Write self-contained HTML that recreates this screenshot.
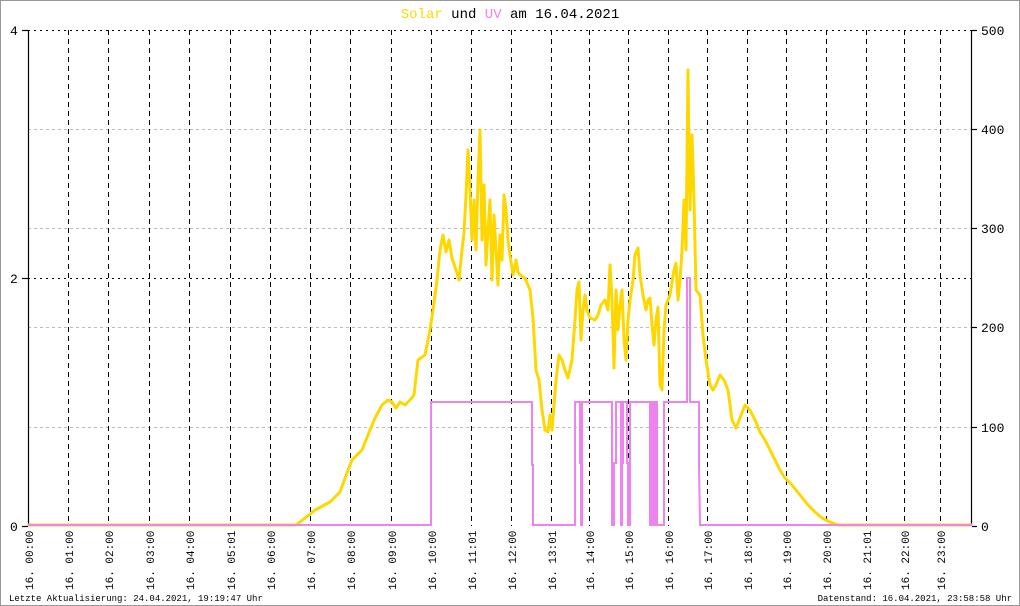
<!DOCTYPE html>
<html><head><meta charset="utf-8"><style>
html,body{margin:0;padding:0;background:#fff;}
svg{display:block;}
text{font-family:"Liberation Mono","DejaVu Sans Mono",monospace;}
</style></head><body>
<svg width="1020" height="606" viewBox="0 0 1020 606" xmlns="http://www.w3.org/2000/svg">
<rect x="0.5" y="0.5" width="1019" height="605" fill="#fff" stroke="#999"/>
<text x="510" y="18" font-size="14" text-anchor="middle"><tspan fill="#ffd700">Solar</tspan><tspan fill="#000"> und </tspan><tspan fill="#ee82ee">UV</tspan><tspan fill="#000"> am 16.04.2021</tspan></text>
<g stroke="#bbb" stroke-dasharray="3,3" stroke-width="1">
<line x1="28" y1="129.5" x2="972" y2="129.5"/>
<line x1="28" y1="228.5" x2="972" y2="228.5"/>
<line x1="28" y1="327.5" x2="972" y2="327.5"/>
<line x1="28" y1="427.5" x2="972" y2="427.5"/>
</g>
<g stroke="#000" stroke-dasharray="2,4" stroke-width="1">
<line x1="28" y1="30.5" x2="972" y2="30.5"/>
<line x1="28" y1="278.5" x2="972" y2="278.5"/>
</g>
<g stroke="#000" stroke-dasharray="5,4" stroke-width="1">
<line x1="68.5" y1="30" x2="68.5" y2="526"/><line x1="108.5" y1="30" x2="108.5" y2="526"/>
<line x1="149.5" y1="30" x2="149.5" y2="526"/><line x1="189.5" y1="30" x2="189.5" y2="526"/>
<line x1="230.5" y1="30" x2="230.5" y2="526"/><line x1="270.5" y1="30" x2="270.5" y2="526"/>
<line x1="310.5" y1="30" x2="310.5" y2="526"/><line x1="350.5" y1="30" x2="350.5" y2="526"/>
<line x1="391.5" y1="30" x2="391.5" y2="526"/><line x1="431.5" y1="30" x2="431.5" y2="526"/>
<line x1="471.5" y1="30" x2="471.5" y2="526"/><line x1="511.5" y1="30" x2="511.5" y2="526"/>
<line x1="551.5" y1="30" x2="551.5" y2="526"/><line x1="589.5" y1="30" x2="589.5" y2="526"/>
<line x1="628.5" y1="30" x2="628.5" y2="526"/><line x1="668.5" y1="30" x2="668.5" y2="526"/>
<line x1="707.5" y1="30" x2="707.5" y2="526"/><line x1="747.5" y1="30" x2="747.5" y2="526"/>
<line x1="786.5" y1="30" x2="786.5" y2="526"/><line x1="826.5" y1="30" x2="826.5" y2="526"/>
<line x1="866.5" y1="30" x2="866.5" y2="526"/><line x1="904.5" y1="30" x2="904.5" y2="526"/>
<line x1="940.5" y1="30" x2="940.5" y2="526"/>
</g>
<g stroke="#000" stroke-width="1.2">
<line x1="28.5" y1="30" x2="28.5" y2="526"/>
<line x1="971.5" y1="30" x2="971.5" y2="526"/>
<line x1="22" y1="30.5" x2="28" y2="30.5"/><line x1="22" y1="278.5" x2="28" y2="278.5"/><line x1="22" y1="526.5" x2="28" y2="526.5"/>
<line x1="972" y1="30.5" x2="977" y2="30.5"/><line x1="972" y1="129.5" x2="977" y2="129.5"/><line x1="972" y1="228.5" x2="977" y2="228.5"/><line x1="972" y1="327.5" x2="977" y2="327.5"/><line x1="972" y1="427.5" x2="977" y2="427.5"/><line x1="972" y1="526.5" x2="977" y2="526.5"/>
</g>
<g font-size="13" fill="#000">
<text x="10" y="35">4</text><text x="10" y="283">2</text><text x="10" y="531">0</text>
<text x="981" y="35">500</text><text x="981" y="134">400</text><text x="981" y="233">300</text><text x="981" y="332">200</text><text x="981" y="432">100</text><text x="981" y="531">0</text>
</g>
<polyline fill="none" stroke="#ffd700" stroke-width="3" stroke-linejoin="round" points="28,525 296,525 305,518 315,510 330,502 340,492 348,470 352,460 362,450 370,430 375,418 382,405 388,400 392,402 396,408 400,402 405,405 410,400 414,395 418,360 425,355 430,330 433,310 437,280 440,250 443,235 446,252 449,240 452,258 456,270 459,280 462,250 464,233 466,195 468,150 470,190 472,240 474,200 476,250 478,180 480,130 482,240 484,185 486,265 488,230 490,200 492,280 494,215 496,250 498,285 500,235 502,260 504,195 506,210 508,240 510,255 513,275 516,260 518,272 520,275 525,278 530,290 533,318 536,370 539,380 542,410 545,430 548,432 550,415 552,430 554,405 556,380 559,355 562,360 565,370 568,378 572,360 575,320 577,290 579,282 581,340 583,310 585,295 587,310 590,318 595,320 598,315 601,305 605,300 608,310 610,265 612,300 614,368 616,290 618,330 620,305 622,290 624,340 626,360 628,320 630,300 633,280 635,255 638,248 640,275 643,295 646,310 648,300 650,298 652,325 654,345 656,320 658,307 660,385 662,390 664,330 666,305 668,300 670,295 672,282 674,270 676,263 678,300 680,280 682,250 684,200 686,250 688,70 689,150 690,210 692,135 694,200 696,290 700,295 703,335 706,360 710,385 713,390 716,385 720,375 724,380 728,390 732,420 736,428 740,418 745,405 750,410 755,420 760,432 765,440 770,450 775,460 780,470 785,478 792,485 800,495 808,505 815,512 822,518 830,522 838,525 972,525"/>
<polyline fill="none" stroke="#ee82ee" stroke-width="2" points="28,525 431,525 431,402 532,402 532,465 533,465 533,525 575,525 575,402 580,402 580,463 581,463 581,525 582,525 582,402 612,402 612,525 614,525 614,463 616,463 616,402 621,402 621,525 622,525 622,463 623,463 623,402 627,402 627,463 628,463 628,525 630,525 630,402 650,402 650,525 651,525 651,402 653,402 653,525 655,525 655,402 657,402 657,525 664,525 664,402 687,402 687,278 690,278 690,402 699,402 699,465 700,525 972,525"/>
<g font-size="11" fill="#000">
<text transform="translate(33,590) rotate(-90)">16. 00:00</text>
<text transform="translate(73,590) rotate(-90)">16. 01:00</text>
<text transform="translate(113,590) rotate(-90)">16. 02:00</text>
<text transform="translate(154,590) rotate(-90)">16. 03:00</text>
<text transform="translate(194,590) rotate(-90)">16. 04:00</text>
<text transform="translate(235,590) rotate(-90)">16. 05:01</text>
<text transform="translate(275,590) rotate(-90)">16. 06:00</text>
<text transform="translate(315,590) rotate(-90)">16. 07:00</text>
<text transform="translate(355,590) rotate(-90)">16. 08:00</text>
<text transform="translate(396,590) rotate(-90)">16. 09:00</text>
<text transform="translate(436,590) rotate(-90)">16. 10:00</text>
<text transform="translate(476,590) rotate(-90)">16. 11:01</text>
<text transform="translate(516,590) rotate(-90)">16. 12:00</text>
<text transform="translate(556,590) rotate(-90)">16. 13:01</text>
<text transform="translate(594,590) rotate(-90)">16. 14:00</text>
<text transform="translate(633,590) rotate(-90)">16. 15:00</text>
<text transform="translate(673,590) rotate(-90)">16. 16:00</text>
<text transform="translate(712,590) rotate(-90)">16. 17:00</text>
<text transform="translate(752,590) rotate(-90)">16. 18:00</text>
<text transform="translate(791,590) rotate(-90)">16. 19:00</text>
<text transform="translate(831,590) rotate(-90)">16. 20:00</text>
<text transform="translate(871,590) rotate(-90)">16. 21:01</text>
<text transform="translate(909,590) rotate(-90)">16. 22:00</text>
<text transform="translate(945,590) rotate(-90)">16. 23:00</text>
</g>
<g font-size="9" fill="#000">
<text x="9" y="601">Letzte Aktualisierung: 24.04.2021, 19:19:47 Uhr</text>
<text x="1012" y="601" text-anchor="end">Datenstand: 16.04.2021, 23:58:58 Uhr</text>
</g>
</svg>
</body></html>
